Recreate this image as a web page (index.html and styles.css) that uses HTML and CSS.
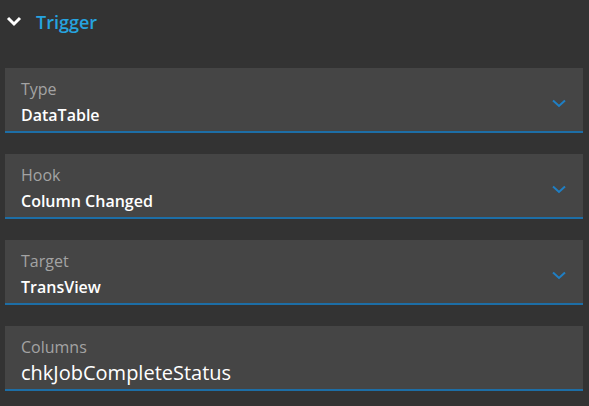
FILE: index.html
```html
<!DOCTYPE html>
<html>
  <head>
    <meta charset="UTF-8" />
    <title>Trigger</title>
    <link rel="stylesheet" href="styles.css">
  </head>
  <body>
    <div class="section">
      <div class="section-header">
        <svg class="toggle" width="16" height="11" viewBox="0 0 16 11">
          <path d="M2 2 L8 8 L14 2" fill="none" stroke="#ffffff" stroke-width="3" />
        </svg>
        <span class="section-title">Trigger</span>
      </div>

      <div class="field">
        <div class="field-body">
          <div class="field-label">Type</div>
          <div class="field-value">DataTable</div>
        </div>
        <svg class="caret" width="14" height="9" viewBox="0 0 14 9">
          <path d="M1 1.5 L7 7 L13 1.5" fill="none" stroke="#1f7fc4" stroke-width="2" />
        </svg>
      </div>

      <div class="field">
        <div class="field-body">
          <div class="field-label">Hook</div>
          <div class="field-value">Column Changed</div>
        </div>
        <svg class="caret" width="14" height="9" viewBox="0 0 14 9">
          <path d="M1 1.5 L7 7 L13 1.5" fill="none" stroke="#1f7fc4" stroke-width="2" />
        </svg>
      </div>

      <div class="field">
        <div class="field-body">
          <div class="field-label">Target</div>
          <div class="field-value">TransView</div>
        </div>
        <svg class="caret" width="14" height="9" viewBox="0 0 14 9">
          <path d="M1 1.5 L7 7 L13 1.5" fill="none" stroke="#1f7fc4" stroke-width="2" />
        </svg>
      </div>

      <div class="field">
        <div class="field-body">
          <div class="field-label">Columns</div>
          <div class="field-value big">chkJobCompleteStatus</div>
        </div>
      </div>
    </div>
  </body>
</html>
```

FILE: styles.css
```css
body {
  margin: 0;
  background: #333333;
  font-family: "Open Sans", "Noto Sans", sans-serif;
}

.section {
  padding: 0 6px 0 5px;
}

.section-header {
  display: flex;
  align-items: center;
  height: 42px;
  padding-left: 1px;
}

.toggle {
  margin-right: 14px;
}

.section-title {
  color: #26a4e0;
  font-size: 18px;
  font-weight: 600;
  padding-top: 2px;
}

.field {
  display: flex;
  align-items: flex-start;
  margin-top: 26px;
  height: 63px;
  background: #454545;
  border-bottom: 2px solid #1d6ea6;
}

.field + .field {
  margin-top: 21px;
}

.field-body {
  flex: 1;
  padding: 11px 0 0 16px;
}

.field-label {
  color: #a3a3a3;
  font-size: 16px;
  line-height: 20px;
}

.field-value {
  margin-top: 6px;
  color: #ffffff;
  font-size: 16px;
  font-weight: 600;
  line-height: 20px;
}

.field-value.big {
  margin-top: 4px;
  font-size: 20px;
  font-weight: normal;
  line-height: 24px;
}

.caret {
  margin: 31px 17px 0 0;
}
```
